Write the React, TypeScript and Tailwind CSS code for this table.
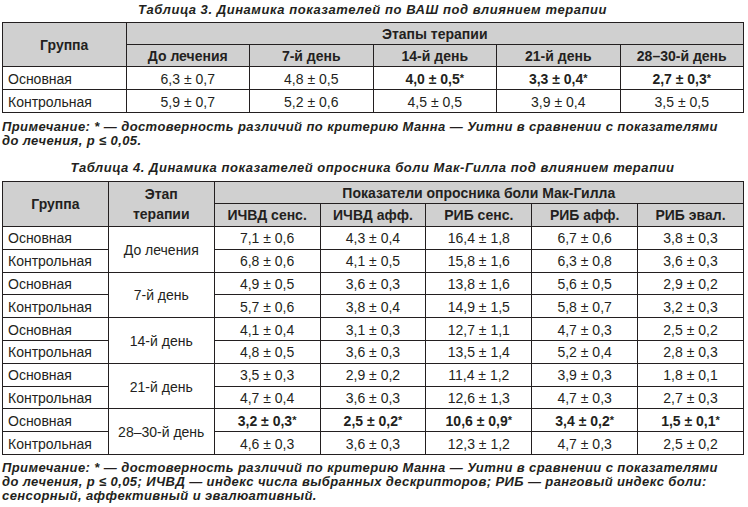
import React from "react";

const B = "border border-[#231f20]";
const HDR = `${B} bg-[#d0d0d0] font-bold p-0 text-center align-middle`;
const TD = `${B} p-0 pt-[1px] text-center align-middle`;
const TDL = `${B} p-0 pt-[1px] pl-[5px] text-left align-middle`;

function Val({ v }: { v: string }) {
  const star = v.endsWith("*");
  if (star) {
    return (
      <span className="font-bold">
        {v.slice(0, -1)}
        <span className="text-[11px] align-[2px]">*</span>
      </span>
    );
  }
  return <span>{v}</span>;
}

const t3 = [
  ["Основная", "6,3 ± 0,7", "4,8 ± 0,5", "4,0 ± 0,5*", "3,3 ± 0,4*", "2,7 ± 0,3*"],
  ["Контрольная", "5,9 ± 0,7", "5,2 ± 0,6", "4,5 ± 0,5", "3,9 ± 0,4", "3,5 ± 0,5"],
];

const t4: { stage: string; rows: string[][] }[] = [
  {
    stage: "До лечения",
    rows: [
      ["Основная", "7,1 ± 0,6", "4,3 ± 0,4", "16,4 ± 1,8", "6,7 ± 0,6", "3,8 ± 0,3"],
      ["Контрольная", "6,8 ± 0,6", "4,1 ± 0,5", "15,8 ± 1,6", "6,3 ± 0,8", "3,6 ± 0,3"],
    ],
  },
  {
    stage: "7-й день",
    rows: [
      ["Основная", "4,9 ± 0,5", "3,6 ± 0,3", "13,8 ± 1,6", "5,6 ± 0,5", "2,9 ± 0,2"],
      ["Контрольная", "5,7 ± 0,6", "3,8 ± 0,4", "14,9 ± 1,5", "5,8 ± 0,7", "3,2 ± 0,3"],
    ],
  },
  {
    stage: "14-й день",
    rows: [
      ["Основная", "4,1 ± 0,4", "3,1 ± 0,3", "12,7 ± 1,1", "4,7 ± 0,3", "2,5 ± 0,2"],
      ["Контрольная", "4,8 ± 0,5", "3,6 ± 0,3", "13,5 ± 1,4", "5,2 ± 0,4", "2,8 ± 0,3"],
    ],
  },
  {
    stage: "21-й день",
    rows: [
      ["Основная", "3,5 ± 0,3", "2,9 ± 0,2", "11,4 ± 1,2", "3,9 ± 0,3", "1,8 ± 0,1"],
      ["Контрольная", "4,7 ± 0,4", "3,6 ± 0,3", "12,6 ± 1,3", "4,7 ± 0,3", "2,7 ± 0,3"],
    ],
  },
  {
    stage: "28–30-й день",
    rows: [
      ["Основная", "3,2 ± 0,3*", "2,5 ± 0,2*", "10,6 ± 0,9*", "3,4 ± 0,2*", "1,5 ± 0,1*"],
      ["Контрольная", "4,6 ± 0,3", "3,6 ± 0,3", "12,3 ± 1,2", "4,7 ± 0,3", "2,5 ± 0,2"],
    ],
  },
];

export default function App() {
  return (
    <div
      className="w-[748px] h-[507px] bg-white text-[#231f20] overflow-hidden"
      style={{ fontFamily: '"Liberation Sans", Arial, sans-serif' }}
    >
      <div className="h-[22px] pt-[2px] text-[13px] leading-[16px] tracking-[0.55px] font-bold italic text-center w-[741px] ml-[2px]">
        Таблица 3. Динамика показателей по ВАШ под влиянием терапии
      </div>
      <table className="border-collapse table-fixed w-[741px] ml-[2px] text-[14px] leading-[16px]">
        <colgroup>
          {[0, 1, 2, 3, 4, 5].map((i) => (
            <col key={i} className="w-[123.5px]" />
          ))}
        </colgroup>
        <thead>
          <tr className="h-[22px]">
            <th rowSpan={2} className={HDR}>
              Группа
            </th>
            <th colSpan={5} className={HDR}>
              Этапы терапии
            </th>
          </tr>
          <tr className="h-[22px]">
            {["До лечения", "7-й день", "14-й день", "21-й день", "28–30-й день"].map((h) => (
              <th key={h} className={HDR}>
                {h}
              </th>
            ))}
          </tr>
        </thead>
        <tbody>
          {t3.map((r) => (
            <tr key={r[0]} className="h-[23px]">
              <td className={TDL}>{r[0]}</td>
              {r.slice(1).map((v, i) => (
                <td key={i} className={TD}>
                  <Val v={v} />
                </td>
              ))}
            </tr>
          ))}
        </tbody>
      </table>
      <div className="mt-[7px] text-[13px] leading-[14px] tracking-[0.4px] font-bold italic ml-[2px] whitespace-nowrap">
        Примечание: * — достоверность различий по критерию Манна — Уитни в сравнении с показателями
        <br />
        до лечения, p ≤ 0,05.
      </div>
      <div className="mt-[12px] h-[21px] text-[13px] leading-[16px] tracking-[0.55px] font-bold italic text-center w-[741px] ml-[2px]">
        Таблица 4. Динамика показателей опросника боли Мак-Гилла под влиянием терапии
      </div>
      <table className="border-collapse table-fixed w-[741px] ml-[2px] text-[14px] leading-[16px]">
        <colgroup>
          {[0, 1, 2, 3, 4, 5, 6].map((i) => (
            <col key={i} className="w-[105.857px]" />
          ))}
        </colgroup>
        <thead>
          <tr className="h-[22px]">
            <th rowSpan={2} className={HDR}>
              Группа
            </th>
            <th rowSpan={2} className={`${HDR} leading-[20px]`}>
              Этап
              <br />
              терапии
            </th>
            <th colSpan={5} className={HDR}>
              Показатели опросника боли Мак-Гилла
            </th>
          </tr>
          <tr className="h-[23px]">
            {["ИЧВД сенс.", "ИЧВД афф.", "РИБ сенс.", "РИБ афф.", "РИБ эвал."].map((h) => (
              <th key={h} className={HDR}>
                {h}
              </th>
            ))}
          </tr>
        </thead>
        <tbody>
          {t4.map((g) =>
            g.rows.map((r, ri) => (
              <tr key={g.stage + ri} className="h-[22.8px]">
                <td className={TDL}>{r[0]}</td>
                {ri === 0 && (
                  <td rowSpan={2} className={TD}>
                    {g.stage}
                  </td>
                )}
                {r.slice(1).map((v, i) => (
                  <td key={i} className={TD}>
                    <Val v={v} />
                  </td>
                ))}
              </tr>
            ))
          )}
        </tbody>
      </table>
      <div className="mt-[6px] text-[13px] leading-[14px] tracking-[0.4px] font-bold italic ml-[2px] whitespace-nowrap">
        Примечание: * — достоверность различий по критерию Манна — Уитни в сравнении с показателями
        <br />
        до лечения, p ≤ 0,05; ИЧВД — индекс числа выбранных дескрипторов; РИБ — ранговый индекс боли:
        <br />
        сенсорный, аффективный и эвалюативный.
      </div>
    </div>
  );
}
